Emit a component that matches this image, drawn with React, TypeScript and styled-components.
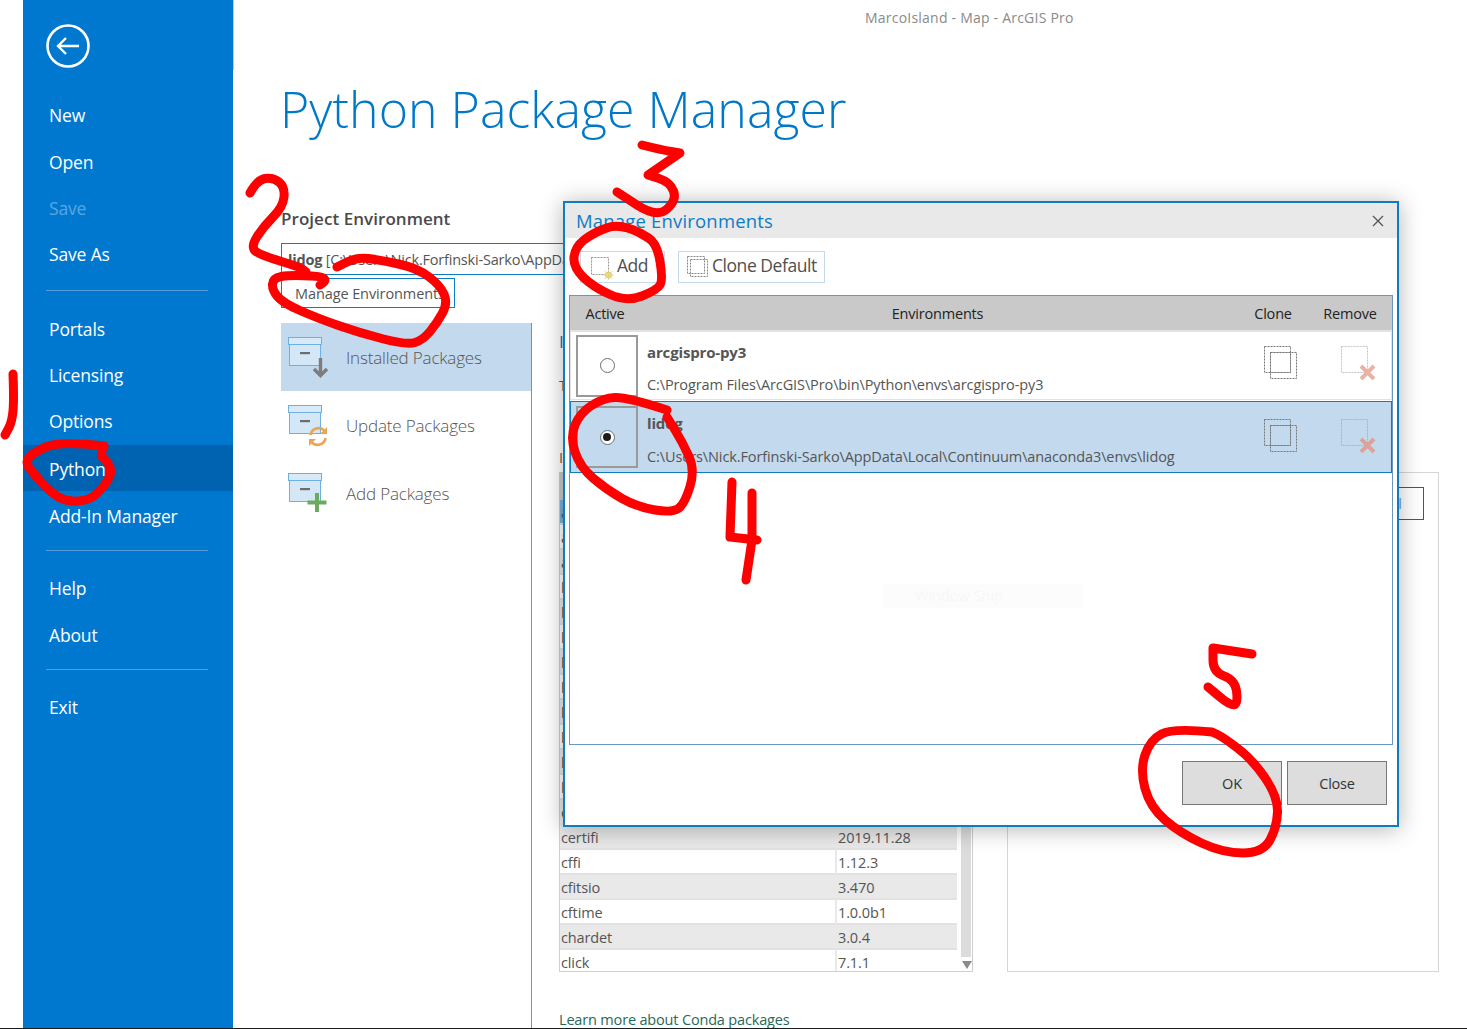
import React from "react";
import styled, { createGlobalStyle } from "styled-components";

const FONT = `"Open Sans", "Noto Sans", "Liberation Sans", sans-serif`;

const Global = createGlobalStyle`
  html, body { margin: 0; padding: 0; background: #fff; }
  #root { width: 1467px; height: 1029px; overflow: hidden; }
  * { box-sizing: border-box; }
`;

const Page = styled.div`
  position: relative;
  display: flex;
  width: 1467px;
  height: 1029px;
  padding-left: 23px;
  overflow: hidden;
  border-bottom: 1px solid #1c1c1c;
  font-family: ${FONT};
  color: #555;
  background: #fff;
`;

/* ---------- sidebar ---------- */
const Sidebar = styled.nav`
  position: relative;
  width: 210px;
  flex: none;
  background: #0078cf;
  display: flex;
  flex-direction: column;
  padding-top: 24px;
  &::after {
    content: "";
    position: absolute;
    top: 0;
    right: -1px;
    width: 1px;
    height: 70px;
    background: #a9d2f2;
  }
`;
const BackButton = styled.div`
  margin-left: 23px;
  width: 44px;
  height: 44px;
  margin-bottom: 25px;
`;
const NavItem = styled.div<{ $active?: boolean; $disabled?: boolean; $mt?: number; $nudge?: number }>`
  height: 46px;
  padding: ${(p) => (p.$nudge && p.$nudge > 0 ? p.$nudge : 0)}px 0 ${(p) => (p.$nudge && p.$nudge < 0 ? -p.$nudge : 0)}px 26px;
  display: flex;
  align-items: center;
  font-size: 17.5px;
  letter-spacing: -0.15px;
  margin-top: ${(p) => p.$mt ?? 0}px;
  color: ${(p) => (p.$disabled ? "#5ca6e0" : "#fff")};
  background: ${(p) => (p.$active ? "#0063b1" : "transparent")};
`;
const NavRule = styled.div<{ $mt: number; $mb: number }>`
  height: 1px;
  margin: ${(p) => p.$mt}px 25px ${(p) => p.$mb}px 23px;
  background: #4f9fdf;
`;

/* ---------- main ---------- */
const Main = styled.main`
  flex: 1;
  min-width: 0;
  display: flex;
  flex-direction: column;
  padding-left: 48px;
`;
const WindowTitle = styled.div`
  height: 36px;
  line-height: 36px;
  padding-left: 584px;
  font-size: 14px;
  letter-spacing: 0.22px;
  color: #8a8a8a;
  white-space: nowrap;
`;
const Title = styled.h1`
  margin: 32px 0 0 -1px;
  height: 83px;
  font-size: 50px;
  line-height: 83px;
  font-weight: 300;
  letter-spacing: 0.05px;
  color: #0078c8;
  white-space: nowrap;
`;
const SectionLabel = styled.div`
  margin-top: 56px;
  height: 24px;
  line-height: 24px;
  font-size: 17px;
  font-weight: 600;
  letter-spacing: 0.05px;
  color: #4a4a4a;
`;
const EnvSelect = styled.div`
  margin-top: 12px;
  width: 400px;
  height: 32px;
  line-height: 31px;
  padding-left: 6px;
  border: 1px solid #0f7cc6;
  font-size: 14.5px;
  letter-spacing: -0.2px;
  white-space: nowrap;
  overflow: hidden;
  b { font-weight: 700; }
`;
const ManageButton = styled.div`
  margin-top: 3px;
  width: 174px;
  height: 30px;
  line-height: 29px;
  padding-left: 13px;
  border: 1px solid #0f7cc6;
  font-size: 14.5px;
  letter-spacing: -0.1px;
  white-space: nowrap;
`;
const Body = styled.div`
  margin-top: 15px;
  flex: 1;
  min-height: 0;
  display: flex;
`;
const Tabs = styled.div`
  width: 251px;
  flex: none;
  border-right: 1px solid #5b9bd5;
`;
const Tab = styled.div<{ $selected?: boolean }>`
  height: 68px;
  display: flex;
  align-items: center;
  padding-left: 6px;
  gap: 12px;
  font-size: 17px;
  font-weight: 300;
  letter-spacing: -0.17px;
  color: #555;
  background: ${(p) => (p.$selected ? "#c3d9ed" : "transparent")};
  svg { margin-top: 4px; }
`;
const Content = styled.section`
  flex: 1;
  min-width: 0;
  padding-left: 27px;
  display: flex;
  flex-direction: column;
`;
const ContentHeading = styled.div`
  margin-top: 7px;
  height: 24px;
  line-height: 24px;
  font-size: 17px;
  color: #0078c8;
`;
const ContentText = styled.div<{ $mt: number }>`
  margin-top: ${(p) => p.$mt}px;
  height: 22px;
  line-height: 22px;
  font-size: 14.5px;
  color: #6b5a48;
`;
const Panels = styled.div`
  margin-top: 3px;
  display: flex;
  gap: 34px;
  height: 500px;
`;
const PackageTable = styled.div`
  position: relative;
  width: 414px;
  flex: none;
  border: 1px solid #cfcfcf;
  border-top: none;
  overflow: hidden;
`;
const TableHeader = styled.div`
  height: 28px;
  background: #c9c9c9;
`;
const Row = styled.div`
  display: grid;
  grid-template-columns: 275px 122px;
  height: 25px;
`;
const Cell = styled.div<{ $tone?: "plain" | "alt" | "selected"; $ver?: boolean }>`
  padding-left: 1px;
  font-size: 14.5px;
  letter-spacing: -0.12px;
  line-height: 25px;
  color: #555;
  border-bottom: 2px solid #e2e2e2;
  background: ${(p) => (p.$tone === "selected" ? "#7ab3dc" : p.$tone === "alt" ? "#e9e9e9" : "#fff")};
  border-left: ${(p) => (p.$ver ? "2px solid #e9e9e9" : "none")};
  white-space: nowrap;
  overflow: hidden;
`;
const Scrollbar = styled.div`
  position: absolute;
  top: 28px;
  right: 1px;
  width: 10px;
  bottom: 14px;
  background: #dcdcdc;
`;
const ScrollArrow = styled.div`
  position: absolute;
  right: 0px;
  bottom: 2px;
  width: 0;
  height: 0;
  border-left: 5px solid transparent;
  border-right: 5px solid transparent;
  border-top: 8px solid #8a8a8a;
`;
const DetailPanel = styled.div`
  width: 432px;
  flex: none;
  border: 1px solid #d6d6d6;
  display: flex;
  justify-content: flex-end;
  padding: 14px 14px 0 0;
  align-items: flex-start;
`;
const UninstallButton = styled.div`
  height: 33px;
  line-height: 31px;
  padding: 0 21px;
  border: 1px solid #555;
  font-size: 14.5px;
  color: #6f9ccb;
`;
const LearnLink = styled.div`
  margin-top: 37px;
  height: 22px;
  line-height: 22px;
  font-size: 14.5px;
  letter-spacing: -0.17px;
  color: #1f6a5a;
  white-space: nowrap;
`;

/* ---------- dialog ---------- */
const Dialog = styled.div`
  position: absolute;
  left: 563px;
  top: 201px;
  width: 836px;
  height: 626px;
  display: flex;
  flex-direction: column;
  background: #fff;
  border: 2px solid #0f7cc0;
  box-shadow: 0 2px 22px rgba(0, 0, 0, 0.3);
`;
const DialogBar = styled.div`
  height: 35px;
  flex: none;
  background: #e9e9e9;
  display: flex;
  align-items: center;
  justify-content: space-between;
  padding: 0 13px 0 11px;
`;
const DialogTitle = styled.div`
  font-size: 18.5px;
  letter-spacing: 0.18px;
  color: #0f7cc6;
`;
const Toolbar = styled.div`
  flex: none;
  height: 57px;
  padding: 13px 0 0 15px;
  display: flex;
  gap: 13px;
  align-items: flex-start;
`;
const ToolButton = styled.div<{ $w: number }>`
  width: ${(p) => p.$w}px;
  height: 32px;
  display: flex;
  align-items: center;
  gap: 3px;
  padding: 0 0 5px 7px;
  border: 1px solid #c3d9ed;
  font-size: 17.5px;
  letter-spacing: -0.45px;
  color: #4f4f4f;
  white-space: nowrap;
  svg { margin-top: 5px; }
`;
const EnvPanel = styled.div`
  margin-left: 4px;
  width: 824px;
  height: 450px;
  flex: none;
  border: 1px solid #6b96bd;
  display: flex;
  flex-direction: column;
`;
const EnvHeader = styled.div`
  height: 35px;
  flex: none;
  display: grid;
  grid-template-columns: 70px 595px 76px 78px;
  align-items: center;
  text-align: center;
  padding-top: 1px;
  background: #c9c9c9;
  font-size: 14.5px;
  letter-spacing: -0.2px;
  color: #222;
  border-bottom: 1px solid #e4e4e4;
`;
const EnvRow = styled.div<{ $selected?: boolean }>`
  height: ${(p) => (p.$selected ? 72 : 69)}px;
  margin-bottom: ${(p) => (p.$selected ? 0 : 1)}px;
  flex: none;
  display: grid;
  grid-template-columns: 76px 1fr 90px 65px;
  align-items: center;
  background: ${(p) => (p.$selected ? "#c3d9ed" : "#fff")};
  border: ${(p) => (p.$selected ? "1px solid #0f7cc0" : "1px solid #e2e2e2")};
`;
const RadioCell = styled.div`
  margin-left: 5px;
  width: 62px;
  height: 62px;
  border: 2px solid #9a9a9a;
  display: flex;
  align-items: center;
  justify-content: center;
`;
const Radio = styled.div<{ $on?: boolean }>`
  width: 15px;
  height: 15px;
  border-radius: 50%;
  border: 1.5px solid #6d6d6d;
  background: #fff;
  display: flex;
  align-items: center;
  justify-content: center;
  &::after {
    content: "";
    display: ${(p) => (p.$on ? "block" : "none")};
    width: 8px;
    height: 8px;
    border-radius: 50%;
    background: #1c1c1c;
  }
`;
const EnvInfo = styled.div<{ $top: number; $bottom: number }>`
  height: 100%;
  display: flex;
  flex-direction: column;
  justify-content: space-between;
  padding: ${(p) => p.$top}px 0 ${(p) => p.$bottom}px;
  min-width: 0;
`;
const EnvName = styled.div`
  font-size: 15px;
  font-weight: 700;
  letter-spacing: -0.15px;
  line-height: 22px;
  color: #555;
`;
const EnvPath = styled.div`
  font-size: 14.5px;
  letter-spacing: -0.11px;
  line-height: 22px;
  color: #555;
  white-space: nowrap;
`;
const IconCell = styled.div<{ $pb: number }>`
  display: flex;
  justify-content: center;
  align-items: center;
  padding-bottom: ${(p) => p.$pb}px;
`;
const DialogFooter = styled.div`
  flex: 1;
  display: flex;
  justify-content: flex-end;
  gap: 5px;
  padding: 16px 10px 0 0;
  align-items: flex-start;
`;
const FooterButton = styled.div`
  width: 100px;
  height: 44px;
  line-height: 44px;
  text-align: center;
  background: #dddddd;
  border: 1px solid #777;
  font-size: 14.5px;
  letter-spacing: -0.2px;
  color: #333;
`;
const GhostTip = styled.div`
  position: absolute;
  left: 882px;
  top: 584px;
  width: 201px;
  height: 24px;
  padding-left: 33px;
  line-height: 24px;
  font-size: 14.5px;
  background: #fcfcfd;
  color: #f7f7f7;
`;
const Annotations = styled.svg`
  position: absolute;
  left: 0;
  top: 0;
  pointer-events: none;
`;

/* ---------- drawings ---------- */
const BackIcon = () => (
  <svg width="44" height="44" viewBox="0 0 44 44" fill="none" stroke="#fff" strokeWidth="2.6">
    <circle cx="22" cy="22" r="20.5" />
    <path d="M33 22H12M20 14l-8 8 8 8" strokeWidth="2.4" />
  </svg>
);

const PackageBox = ({ children }: { children?: React.ReactNode }) => (
  <svg width="47" height="47" viewBox="0 0 47 47">
    <rect x="2.5" y="8.5" width="31" height="21" fill="#d3e7f7" stroke="#6fb0e2" />
    <rect x="1.5" y="1.5" width="33" height="7" fill="#d8eaf8" stroke="#6fb0e2" />
    <rect x="13" y="16" width="10" height="2.2" fill="#6d6d6d" />
    {children}
  </svg>
);

const InstalledIcon = () => (
  <PackageBox>
    <path d="M33.5 22v17M27 33l6.500 6.500 6.500-6.500" fill="none" stroke="#7c7c7c" strokeWidth="3.4" />
  </PackageBox>
);
const UpdateIcon = () => (
  <PackageBox>
    <path d="M23.500 31a8 8 0 0 1 14-4" fill="none" stroke="#eda450" strokeWidth="2.6" />
    <path d="M40 23v7h-7z" fill="#eda450" />
    <path d="M38.500 34a8 8 0 0 1-14 4" fill="none" stroke="#eda450" strokeWidth="2.6" />
    <path d="M22 42v-7h7z" fill="#eda450" />
  </PackageBox>
);
const AddIcon = () => (
  <PackageBox>
    <path d="M30 21v19M20.500 30.500h19" stroke="#6cab5d" strokeWidth="4" />
  </PackageBox>
);

const DashSquare = ({ x, y, s, c = "#777" }: { x: number; y: number; s: number; c?: string }) => (
  <rect x={x} y={y} width={s} height={s} fill="none" stroke={c} strokeDasharray="2 1" />
);
const AddGlyph = () => (
  <svg width="26" height="26" viewBox="0 0 26 26">
    <DashSquare x={3.5} y={3.5} s={17} c="#999" />
    <circle cx="20.5" cy="21" r="3" fill="#f3e38f" stroke="#d9c65e" />
    <path d="M20.500 15.500v11M15 21h11M16.500 17l8 8M24.500 17l-8 8" stroke="#e2d27a" strokeWidth=".8" />
  </svg>
);
const CloneGlyph = () => (
  <svg width="23" height="24" viewBox="0 0 23 24">
    <DashSquare x={1.5} y={1.5} s={17} c="#888" />
    <DashSquare x={4.5} y={4.5} s={17} c="#888" />
  </svg>
);
const CloneIcon = () => (
  <svg width="34" height="34" viewBox="0 0 34 34">
    <DashSquare x={0.5} y={0.5} s={26} />
    <DashSquare x={6.5} y={6.5} s={26} />
    <DashSquare x={6.5} y={6.5} s={20} />
  </svg>
);
const RemoveIcon = ({ box, cross }: { box: string; cross: string }) => (
  <svg width="36" height="34" viewBox="0 0 36 34">
    <DashSquare x={0.5} y={0.5} s={26} c={box} />
    <path d="M20 20l13 13M33 20L20 33" stroke={cross} strokeWidth="4" />
  </svg>
);
const CloseIcon = () => (
  <svg width="12" height="12" viewBox="0 0 12 12" stroke="#555" strokeWidth="1.3">
    <path d="M1 1l10 10M11 1L1 11" />
  </svg>
);

type Pt = [number, number];
const smooth = (p: Pt[]) => {
  let d = `M${p[0][0]} ${p[0][1]}`;
  for (let i = 1; i < p.length - 1; i++) {
    const mx = (p[i][0] + p[i + 1][0]) / 2;
    const my = (p[i][1] + p[i + 1][1]) / 2;
    d += ` Q${p[i][0]} ${p[i][1]} ${mx} ${my}`;
  }
  return `${d} L${p[p.length - 1][0]} ${p[p.length - 1][1]}`;
};

const strokes: Pt[][] = [
  [[13, 374], [14, 400], [12, 422], [5, 435]],
  [[104, 446], [60, 441], [34, 452], [25, 462], [33, 473], [50, 492], [67, 502], [90, 500], [103, 488], [112, 473], [108, 462], [100, 455], [104, 446]],
  [[250, 193], [257, 180], [273, 177], [285, 187], [283, 207], [263, 227], [250, 248], [263, 256], [300, 267], [306, 272]],
  [[320, 285], [333, 277], [290, 275], [273, 278], [272, 290], [283, 303], [317, 318], [360, 333], [407, 345], [423, 340], [437, 323], [448, 303], [440, 285], [417, 268], [380, 260], [357, 257], [337, 267]],
  [[642, 145], [662, 150], [680, 153], [680, 153], [648, 175], [648, 175], [670, 182], [677, 200], [657, 218], [617, 192]],
  [[640, 233], [620, 223], [593, 233], [575, 247], [573, 267], [593, 287], [627, 302], [657, 290], [663, 280], [657, 243], [640, 233]],
  [[667, 410], [627, 397], [603, 398], [580, 413], [570, 437], [580, 467], [607, 490], [637, 507], [673, 513], [685, 503], [695, 470], [683, 443], [667, 417]],
  [[1252, 654], [1213, 648], [1213, 648], [1213, 672], [1235, 680], [1238, 702], [1232, 707], [1208, 687]],
  [[1212, 732], [1173, 728], [1150, 740], [1140, 770], [1150, 807], [1180, 833], [1223, 853], [1263, 853], [1277, 827], [1278, 797], [1253, 760], [1223, 737], [1212, 732]],
];

const packages: [string, string][] = [
  ["asn1crypto", "1.2.0"], ["attrs", "19.3.0"], ["backcall", "0.1.0"], ["backports", "1.0"],
  ["bleach", "3.1.0"], ["blas", "1.0"], ["bokeh", "1.4.0"], ["boost", "1.67.0"],
  ["bottleneck", "1.2.1"], ["brotli", "1.0.7"], ["bzip2", "1.0.8"], ["ca-certificates", "2019.11.27"],
];
const visible: [string, string][] = [
  ["certifi", "2019.11.28"], ["cffi", "1.12.3"], ["cfitsio", "3.470"],
  ["cftime", "1.0.0b1"], ["chardet", "3.0.4"], ["click", "7.1.1"],
];
const navTop = ["New", "Open", "Save", "Save As"];

export default function App() {
  return (
    <Page>
      <Global />
      <Sidebar>
        <BackButton><BackIcon /></BackButton>
        {navTop.map((n) => (
          <NavItem key={n} $disabled={n === "Save"} $nudge={n === "New" ? -2 : 0}>{n}</NavItem>
        ))}
        <NavRule $mt={13} $mb={15} />
        <NavItem>Portals</NavItem>
        <NavItem>Licensing</NavItem>
        <NavItem>Options</NavItem>
        <NavItem $active $mt={1} $nudge={2}>Python</NavItem>
        <NavItem $mt={2}>Add-In Manager</NavItem>
        <NavRule $mt={11} $mb={14} />
        <NavItem>Help</NavItem>
        <NavItem $mt={1}>About</NavItem>
        <NavRule $mt={11} $mb={14} />
        <NavItem>Exit</NavItem>
      </Sidebar>

      <Main>
        <WindowTitle>MarcoIsland - Map - ArcGIS Pro</WindowTitle>
        <Title>Python Package Manager</Title>
        <SectionLabel>Project Environment</SectionLabel>
        <EnvSelect>
          <b>lidog</b> [C:\Users\Nick.Forfinski-Sarko\AppData\Local\Continuum]
        </EnvSelect>
        <ManageButton>Manage Environments</ManageButton>
        <Body>
          <Tabs>
            <Tab $selected><InstalledIcon />Installed Packages</Tab>
            <Tab><UpdateIcon />Update Packages</Tab>
            <Tab><AddIcon />Add Packages</Tab>
          </Tabs>
          <Content>
            <ContentHeading>Installed Packages</ContentHeading>
            <ContentText $mt={21}>The packages installed in this environment</ContentText>
            <ContentText $mt={50}>Installed</ContentText>
            <Panels>
              <PackageTable>
                <TableHeader />
                <Row>
                  <Cell $tone="selected">affine</Cell>
                  <Cell $ver $tone="selected">2.3.0</Cell>
                </Row>
                {packages.map(([n, v], i) => (
                  <Row key={n}>
                    <Cell $tone={i % 2 === 1 ? "alt" : "plain"}>{n}</Cell>
                    <Cell $ver $tone={i % 2 === 1 ? "alt" : "plain"}>{v}</Cell>
                  </Row>
                ))}
                {visible.map(([n, v], i) => (
                  <Row key={n}>
                    <Cell $tone={i % 2 === 0 ? "alt" : "plain"}>{n}</Cell>
                    <Cell $ver $tone={i % 2 === 0 ? "alt" : "plain"}>{v}</Cell>
                  </Row>
                ))}
                <Scrollbar />
                <ScrollArrow />
              </PackageTable>
              <DetailPanel>
                <UninstallButton>Uninstall</UninstallButton>
              </DetailPanel>
            </Panels>
            <LearnLink>Learn more about Conda packages</LearnLink>
          </Content>
        </Body>
      </Main>

      <Dialog>
        <DialogBar>
          <DialogTitle>Manage Environments</DialogTitle>
          <CloseIcon />
        </DialogBar>
        <Toolbar>
          <ToolButton $w={85}><AddGlyph />Add</ToolButton>
          <ToolButton $w={147}><CloneGlyph />Clone Default</ToolButton>
        </Toolbar>
        <EnvPanel>
          <EnvHeader>
            <span>Active</span>
            <span>Environments</span>
            <span>Clone</span>
            <span>Remove</span>
          </EnvHeader>
          <EnvRow>
            <RadioCell><Radio /></RadioCell>
            <EnvInfo $top={9} $bottom={3}>
              <EnvName>arcgispro-py3</EnvName>
              <EnvPath>C:\Program Files\ArcGIS\Pro\bin\Python\envs\arcgispro-py3</EnvPath>
            </EnvInfo>
            <IconCell $pb={5}><CloneIcon /></IconCell>
            <IconCell $pb={5}><RemoveIcon box="#c4c4c4" cross="#e8b3a2" /></IconCell>
          </EnvRow>
          <EnvRow $selected>
            <RadioCell><Radio $on /></RadioCell>
            <EnvInfo $top={10} $bottom={4}>
              <EnvName>lidog</EnvName>
              <EnvPath>C:\Users\Nick.Forfinski-Sarko\AppData\Local\Continuum\anaconda3\envs\lidog</EnvPath>
            </EnvInfo>
            <IconCell $pb={2}><CloneIcon /></IconCell>
            <IconCell $pb={2}><RemoveIcon box="#a8b4bf" cross="#d9a49b" /></IconCell>
          </EnvRow>
        </EnvPanel>
        <DialogFooter>
          <FooterButton>OK</FooterButton>
          <FooterButton>Close</FooterButton>
        </DialogFooter>
      </Dialog>

      <GhostTip>Window Snip</GhostTip>

      <Annotations width="1467" height="1029" viewBox="0 0 1467 1029" fill="none" stroke="#fe0000" strokeWidth="9" strokeLinecap="round" strokeLinejoin="round">
        {strokes.map((s, i) => (
          <path key={i} d={smooth(s)} />
        ))}
        <path d="M732 482L730 537L757 540" />
        <path d="M752 493L752 540L746 580" />
      </Annotations>
    </Page>
  );
}
